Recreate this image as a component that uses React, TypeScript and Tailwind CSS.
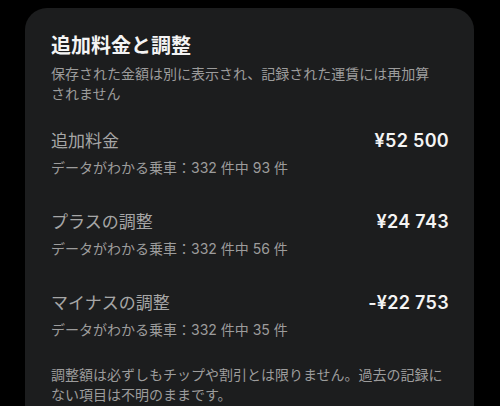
const rows = [
  { label: "追加料金", amount: "¥52 500", found: 93 },
  { label: "プラスの調整", amount: "¥24 743", found: 56 },
  { label: "マイナスの調整", amount: "-¥22 753", found: 35 },
];

const font = { fontFamily: 'Inter, "Noto Sans CJK JP", sans-serif' };

export default function App() {
  return (
    <div className="h-[406px] overflow-hidden bg-black pt-[8px]" style={font}>
      <div className="ml-[25px] w-[449px] rounded-[22px] bg-[#1c1d1e] pl-[26px] pr-[25px] pt-[24px] pb-10">
        {/* Header */}
        <h2 className="text-[20px] leading-[28px] font-bold text-[#f4f4f4]">追加料金と調整</h2>
        <p className="mt-[4px] max-w-[385px] text-[14px] leading-[20px] text-[#9c9c9c]">
          保存された金額は別に表示され、記録された運賃には再加算されません
        </p>

        {/* Totals */}
        <div className="mt-[25px] flex flex-col gap-[32px]">
          {rows.map((r) => (
            <div key={r.label}>
              <div className="flex items-center justify-between">
                <span className="text-[17px] leading-[24px] text-[#a6a6a6]">{r.label}</span>
                <span className="text-[18px] leading-[24px] font-semibold tracking-[0.3px] text-[#f4f4f4]">
                  {r.amount}
                </span>
              </div>
              <p className="mt-[5px] text-[14px] leading-[20px] text-[#9c9c9c]">
                データがわかる乗車：332 件中 {r.found} 件
              </p>
            </div>
          ))}
        </div>

        <p className="mt-[25px] max-w-[397px] text-[14px] leading-[20px] text-[#9c9c9c]">
          調整額は必ずしもチップや割引とは限りません。過去の記録にない項目は不明のままです。
        </p>
      </div>
    </div>
  );
}
